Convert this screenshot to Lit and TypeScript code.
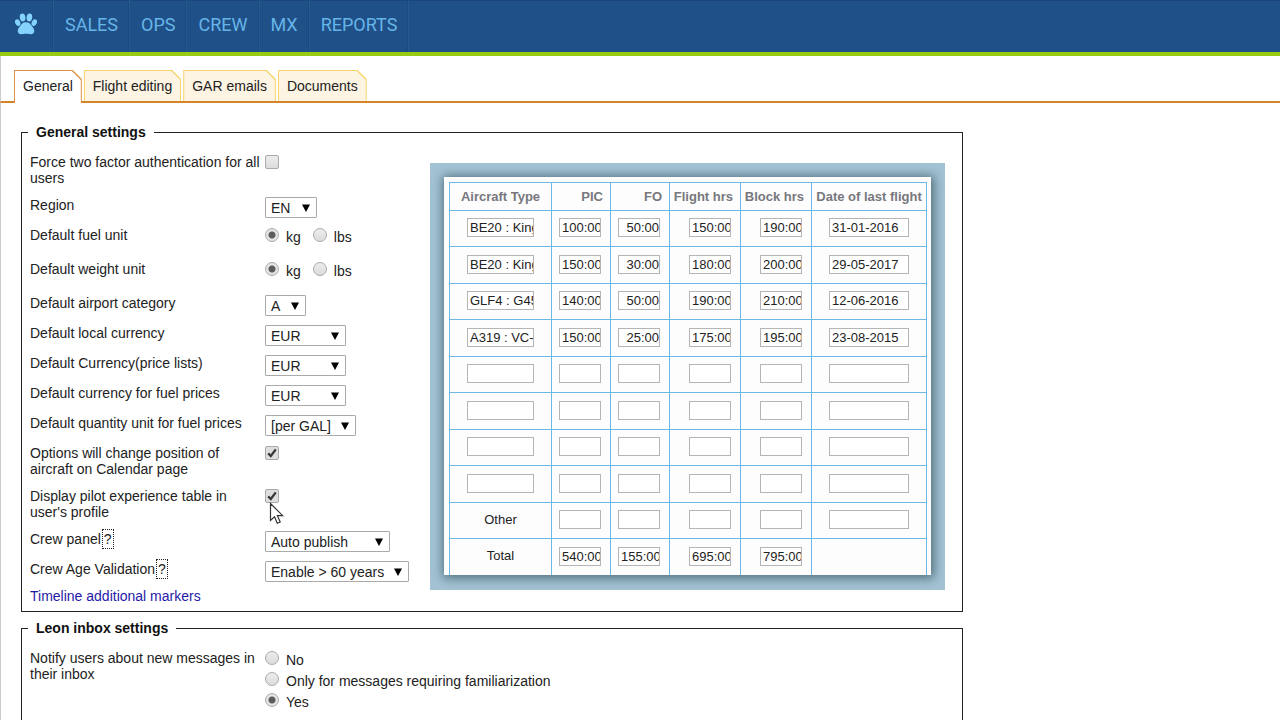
import { LitElement, html, css, svg } from "lit";
import { customElement, state } from "lit/decorators.js";

interface Choice {
  id: string;
  text: string;
  value: string;
  size: string;
  hint?: boolean;
}

const NAV = ["SALES", "OPS", "CREW", "MX", "REPORTS"];
const TABS = ["General", "Flight editing", "GAR emails", "Documents"];

const CHOICES: Choice[] = [
  { id: "airport", text: "Default airport category", value: "A", size: "w-a" },
  { id: "local", text: "Default local currency", value: "EUR", size: "w-cur" },
  { id: "price", text: "Default Currency(price lists)", value: "EUR", size: "w-cur" },
  { id: "fuelcur", text: "Default currency for fuel prices", value: "EUR", size: "w-cur" },
  { id: "quantity", text: "Default quantity unit for fuel prices", value: "[per GAL]", size: "w-gal" },
];

const HINTED: Choice[] = [
  { id: "crew", text: "Crew panel", value: "Auto publish", size: "w-crew", hint: true },
  { id: "age", text: "Crew Age Validation", value: "Enable > 60 years", size: "w-age", hint: true },
];

const HEADS = ["Aircraft Type", "PIC", "FO", "Flight hrs", "Block hrs", "Date of last flight"];
const FLIGHTS: string[][] = [
  ["BE20 : King Air", "100:00", "50:00", "150:00", "190:00", "31-01-2016"],
  ["BE20 : King Air", "150:00", "30:00", "180:00", "200:00", "29-05-2017"],
  ["GLF4 : G450", "140:00", "50:00", "190:00", "210:00", "12-06-2016"],
  ["A319 : VC-1", "150:00", "25:00", "175:00", "195:00", "23-08-2015"],
  ["", "", "", "", "", ""],
  ["", "", "", "", "", ""],
  ["", "", "", "", "", ""],
  ["", "", "", "", "", ""],
];

@customElement("experience-table")
export class ExperienceTable extends LitElement {
  static styles = css`
    :host {
      display: block;
      background: #a3c3d4;
      padding: 14px 14px 15px;
      font: 13px/16px "Liberation Sans", Arial, sans-serif;
      color: #222;
    }
    .sheet {
      background: #fdfdfe;
      padding: 5px 4px 0 5px;
      box-shadow: 1px 1px 10px 2px #4f6d78;
      height: 393px;
      overflow: hidden;
    }
    .grid {
      width: 100%;
      border-collapse: collapse;
      table-layout: fixed;
    }
    th, td {
      border: 1px solid #6cb9e6;
      padding: 0 9px 2px 0;
      text-align: right;
      height: 34px;
      box-sizing: border-box;
    }
    th {
      height: 28px;
      padding: 0 7px 0 0;
      color: #77777d;
      font-weight: bold;
      white-space: nowrap;
    }
    tr { height: 36px; }
    tr:nth-child(even) { height: 37px; }
    thead tr { height: 28px; }
    .mid { text-align: center; padding-left: 0; padding-right: 0; }
    .c-type { width: 102px; }
    .c-short { width: 59px; }
    .c-long { width: 71px; }
    .box {
      box-sizing: border-box;
      display: inline-block;
      vertical-align: middle;
      width: 42px;
      height: 19px;
      margin: 0;
      padding: 0 0 0 2px;
      border: 1px solid #b5b5b5;
      border-radius: 0;
      background: #fff;
      color: #222;
      font: inherit;
      outline: none;
    }
    .num { text-align: right; }
    .type { width: 67px; }
    .date { width: 80px; }
  `;

  private cell(value: string, col: number, row: string) {
    const kind = col === 0 ? "type" : col === 5 ? "date" : "num";
    return html`<td class=${col === 0 || col === 5 ? "mid" : ""}>
      <input class="box ${kind}" type="text" aria-label="${HEADS[col]}, ${row}" .value=${value} />
    </td>`;
  }

  render() {
    const blank = ["", "", "", "", ""];
    const totals = ["540:00", "155:00", "695:00", "795:00"];
    return html`<div class="sheet">
      <table class="grid">
        <colgroup>
          <col class="c-type" /><col class="c-short" /><col class="c-short" />
          <col class="c-long" /><col class="c-long" /><col />
        </colgroup>
        <thead>
          <tr>${HEADS.map((h, i) => html`<th scope="col" class=${i === 0 || i === 5 ? "mid" : ""}>${h}</th>`)}</tr>
        </thead>
        <tbody>
          ${FLIGHTS.map((r, n) => html`<tr>${r.map((v, i) => this.cell(v, i, `row ${n + 1}`))}</tr>`)}
          <tr><td class="mid">Other</td>${blank.map((v, i) => this.cell(v, i + 1, "other"))}</tr>
          <tr><td class="mid">Total</td>${totals.map((v, i) => this.cell(v, i + 1, "total"))}<td></td></tr>
        </tbody>
      </table>
    </div>`;
  }
}

@customElement("app-root")
export class AppRoot extends LitElement {
  @state() private tab = 0;

  static styles = css`
    :host {
      display: block;
      box-sizing: border-box;
      height: 100vh;
      overflow: hidden;
      position: relative;
      background: #fff;
      color: #222;
      font: 14px/16px "Liberation Sans", Arial, sans-serif;
    }
    .top {
      display: flex;
      height: 52px;
      background: #205088;
      border-bottom: 4px solid #98cb12;
      box-shadow: inset 0 1px 0 #1b457a;
    }
    .item {
      display: flex;
      align-items: center;
      padding: 0 11px 2px;
      border-right: 1px solid #27598f;
      box-shadow: inset -1px 0 0 #1c4a80;
      color: #66b5e8;
      font: 18px/24px Roboto, sans-serif;
      text-decoration: none;
    }
    .home { padding: 0 16px 4px 15px; }
    .paw { width: 22px; height: 22px; fill: #84d3ff; display: block; }
    .tabs {
      display: flex;
      gap: 2px;
      padding: 14px 0 0 13px;
      border-left: 1px solid #ccc;
      border-bottom: 2px solid #d4842a;
    }
    .tab, .tab::before {
      clip-path: polygon(0 0, calc(100% - 9px) 0, 100% 9px, 100% 100%, 0 100%);
    }
    .tab {
      position: relative;
      height: 31px;
      padding: 0 9px;
      border: 0;
      background: #f8d46c;
      color: #222;
      font: inherit;
    }
    .tab::before {
      content: "";
      position: absolute;
      inset: 1px 1px 0;
      background: #fdf4e3;
    }
    .tab.on { background: #dd9248; height: 33px; margin-bottom: -2px; padding-bottom: 2px; }
    .tab.on::before { background: #fff; }
    .cap { position: relative; }
    .body {
      display: flex;
      flex-direction: column;
      gap: 8px;
      padding: 21px 20px 20px;
      border-left: 1px solid #ccc;
    }
    .group {
      box-sizing: border-box;
      width: 100%;
      max-width: 942px;
      min-width: 0;
      margin: 0;
      padding: 14px 17px 7px 8px;
      border: 1px solid #222;
    }
    .group.tall { padding-bottom: 30px; }
    .title {
      padding: 0 8px;
      margin-left: -2px;
      font-weight: bold;
      color: #111;
    }
    .split { display: flex; align-items: flex-start; }
    .side { flex: 0 0 400px; }
    .list {
      display: flex;
      flex-direction: column;
      gap: 10px;
    }
    .shot { flex: 1; min-width: 0; margin-top: 9px; }
    .row {
      display: grid;
      grid-template-columns: 235px 1fr;
      min-height: 20px;
      align-items: start;
    }
    .row.two { min-height: 33px; }
    .row.duo { min-height: 24px; }
    .name { padding-right: 4px; }
    .pair { display: flex; gap: 12px; }
    .stack { display: flex; flex-direction: column; gap: 3px; }
    .opt { display: flex; gap: 7px; }
    .word { padding-top: 2px; }
    .tick, .dot {
      appearance: none;
      box-sizing: border-box;
      width: 14px;
      height: 14px;
      margin: 1px 0 0;
      border: 1px solid #a9a9a9;
      border-radius: 2px;
      background: linear-gradient(#ececec, #dcdcdc);
    }
    .tick { display: block; }
    .tick:checked {
      background: #dedede url("data:image/svg+xml,%3Csvg xmlns='http://www.w3.org/2000/svg' viewBox='0 0 12 12'%3E%3Cpath d='M2.2 6.4 4.8 9 9.8 2.4' fill='none' stroke='%23383838' stroke-width='2.3'/%3E%3C/svg%3E") center / 12px no-repeat;
    }
    .dot { border-radius: 50%; }
    .dot:checked { background: radial-gradient(circle, #5c5c5c 3px, #e4e4e4 4px); }
    .pick {
      appearance: none;
      box-sizing: border-box;
      height: 21px;
      margin: 0 0 -1px;
      padding: 0 0 0 5px;
      border: 1px solid #aaa;
      border-radius: 1px;
      color: #222;
      font: inherit;
      background: #fff url("data:image/svg+xml,%3Csvg xmlns='http://www.w3.org/2000/svg' viewBox='0 0 8 8'%3E%3Cpath d='M0 .5h8L4 8z'/%3E%3C/svg%3E") right 6px center / 8px no-repeat;
    }
    .w-en { width: 52px; }
    .w-a { width: 41px; }
    .w-cur { width: 81px; }
    .w-gal { width: 91px; }
    .w-crew { width: 125px; }
    .w-age { width: 144px; }
    .hint {
      margin-left: 1px;
      padding: 1px;
      border: 1px dotted #222;
      color: #222;
      text-decoration: none;
    }
    .more {
      display: inline-block;
      margin-top: 7px;
      color: #1f1aa8;
      text-decoration: none;
    }
    .pointer {
      position: absolute;
      left: 269px;
      top: 502px;
      width: 15px;
      height: 23px;
    }
  `;

  private label(c: Choice) {
    return html`<span class="name"><label for=${c.id}>${c.text}</label>${c.hint
      ? html`<a class="hint" href="#${c.id}">?</a>` : ""}</span>`;
  }

  private choice(c: Choice) {
    return html`<div class="row">
      ${this.label(c)}
      <select id=${c.id} class="pick ${c.size}"><option>${c.value}</option></select>
    </div>`;
  }

  private unit(id: string, text: string) {
    return html`<div class="row duo" role="radiogroup" aria-labelledby=${id}>
      <span class="name" id=${id}>${text}</span>
      <span class="pair">${["kg", "lbs"].map((u, i) => this.radio(id, u, i === 0))}</span>
    </div>`;
  }

  private radio(group: string, text: string, on: boolean) {
    return html`<label class="opt">
      <input class="dot" type="radio" name="${group}-value" .checked=${on} /><span class="word">${text}</span>
    </label>`;
  }

  private check(id: string, text: string, on: boolean) {
    return html`<div class="row two">
      <label class="name" for=${id}>${text}</label>
      <input class="tick" id=${id} type="checkbox" .checked=${on} />
    </div>`;
  }

  render() {
    const paw = svg`
      <ellipse cx="7.6" cy="4.4" rx="2.8" ry="4" transform="rotate(-8 7.6 4.4)"/>
      <ellipse cx="14.4" cy="4.4" rx="2.8" ry="4" transform="rotate(8 14.4 4.4)"/>
      <ellipse cx="2.7" cy="9.6" rx="2.5" ry="3.5" transform="rotate(-24 2.7 9.6)"/>
      <ellipse cx="19.3" cy="9.6" rx="2.5" ry="3.5" transform="rotate(24 19.3 9.6)"/>
      <path d="M11 9.200c3.200 0 4.800 2.200 6.200 4.200 1.300 1.800 2.400 3 2 5.200-.4 2.100-2 2.900-3.800 2.600-1.600-.2-2.500-.5-4.400-.5s-2.800.3-4.400.5c-1.800.3-3.400-.5-3.800-2.600-.4-2.200.7-3.400 2-5.200C6.200 11.400 7.800 9.200 11 9.200z"/>`;
    return html`
      <nav class="top">
        <a class="item home" href="#home" aria-label="Home"><svg class="paw" viewBox="0 0 22 22">${paw}</svg></a>
        ${NAV.map((n) => html`<a class="item" href="#${n.toLowerCase()}">${n}</a>`)}
      </nav>
      <div class="tabs" role="tablist">
        ${TABS.map((t, i) => html`<button class="tab ${this.tab === i ? "on" : ""}" role="tab"
          aria-selected=${this.tab === i} @click=${() => (this.tab = i)}><span class="cap">${t}</span></button>`)}
      </div>
      <main class="body">
        <fieldset class="group">
          <legend class="title">General settings</legend>
          <div class="split">
            <div class="side">
              <div class="list">
                ${this.check("twofactor", "Force two factor authentication for all users", false)}
                ${this.choice({ id: "region", text: "Region", value: "EN", size: "w-en" })}
                ${this.unit("fuel", "Default fuel unit")}
                ${this.unit("weight", "Default weight unit")}
                ${CHOICES.map((c) => this.choice(c))}
                ${this.check("calendar", "Options will change position of aircraft on Calendar page", true)}
                ${this.check("experience", "Display pilot experience table in user's profile", true)}
                ${HINTED.map((c) => this.choice(c))}
              </div>
              <a class="more" href="#markers">Timeline additional markers</a>
            </div>
            <experience-table class="shot"></experience-table>
          </div>
        </fieldset>
        <fieldset class="group tall">
          <legend class="title">Leon inbox settings</legend>
          <div class="row" role="radiogroup" aria-labelledby="notify">
            <span class="name" id="notify">Notify users about new messages in their inbox</span>
            <span class="stack">
              ${this.radio("notify", "No", false)}
              ${this.radio("notify", "Only for messages requiring familiarization", false)}
              ${this.radio("notify", "Yes", true)}
            </span>
          </div>
        </fieldset>
      </main>
      <svg class="pointer" viewBox="0 0 15 23" aria-hidden="true">
        <path d="M1.500 1.500v17l4-3.700 2.800 6.400 2.900-1.200-2.800-6.300h5.300z" fill="#fff" stroke="#333" stroke-width="1.200"/>
      </svg>`;
  }
}
